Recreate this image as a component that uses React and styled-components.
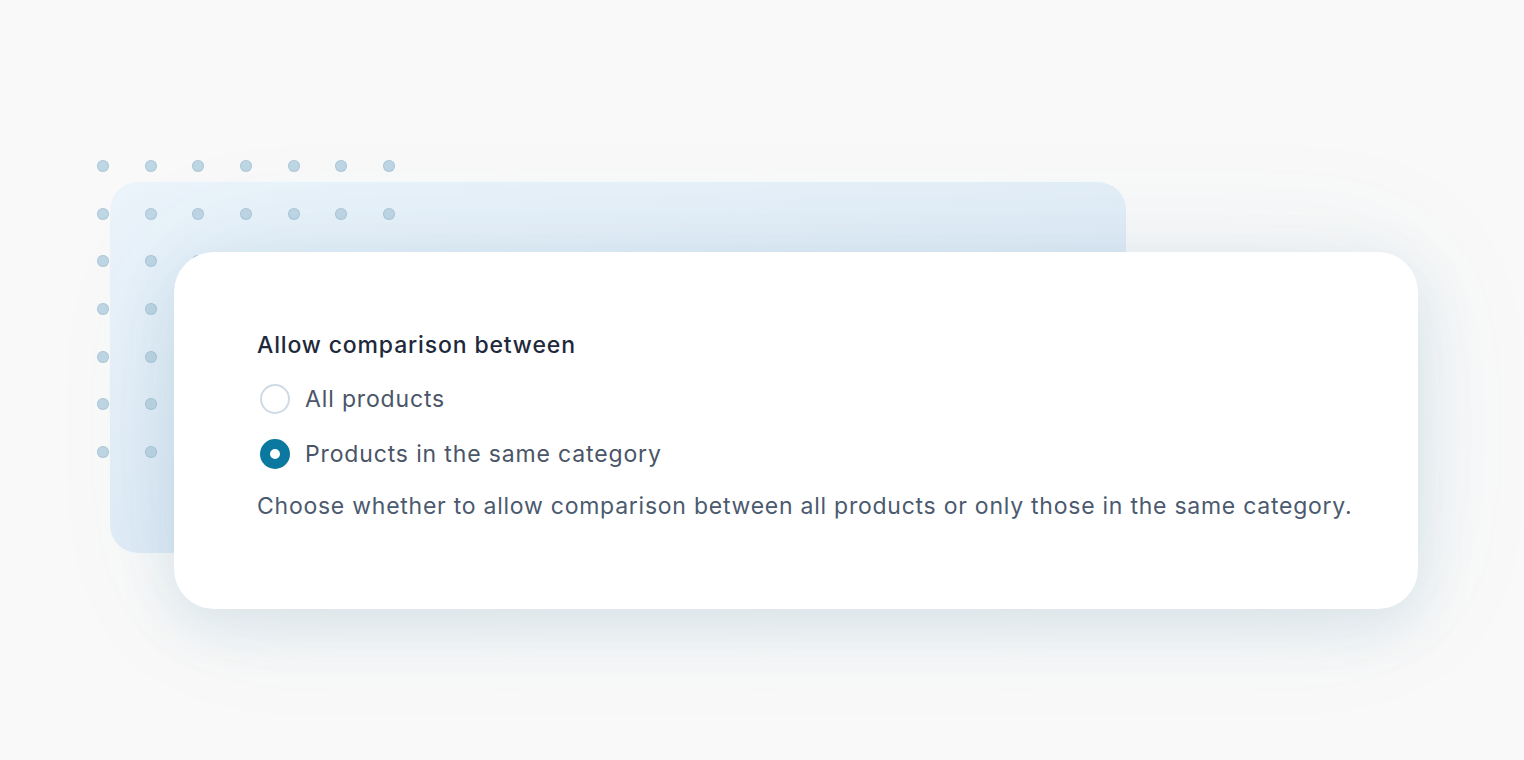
import React from 'react'
import styled, { createGlobalStyle } from 'styled-components'

const GlobalStyle = createGlobalStyle`
  html, body {
    margin: 0;
    padding: 0;
    background: #f9f9f9;
  }
  body {
    font-family: Inter, "Noto Sans", "Liberation Sans", sans-serif;
    -webkit-font-smoothing: antialiased;
  }
`

const Stage = styled.div`
  position: relative;
  width: 1524px;
  height: 760px;
  overflow: hidden;
  padding: 252px 0 0 174px;
  box-sizing: border-box;
`

const BackPanel = styled.div`
  position: absolute;
  left: 110px;
  top: 182px;
  width: 1016px;
  height: 371px;
  border-radius: 28px;
  background: linear-gradient(165deg, #ebf4fb 0%, #e1ecf6 55%, #dce9f3 100%);
`

const DotGrid = styled.div`
  position: absolute;
  left: 97px;
  top: 160px;
  display: grid;
  grid-template-columns: repeat(7, 12px);
  grid-auto-rows: 12px;
  column-gap: 35.7px;
  row-gap: 35.7px;
`

const Dot = styled.span`
  width: 12px;
  height: 12px;
  border-radius: 50%;
  background: #bfd6e4;
  box-shadow: inset 0 0 0 1px rgba(140, 175, 195, 0.35);
`

const Card = styled.section`
  position: relative;
  width: 1244px;
  height: 357px;
  box-sizing: border-box;
  padding: 78px 0 0 83px;
  background: #fff;
  border-radius: 40px;
  box-shadow:
    0 16px 60px rgba(20, 100, 135, 0.12),
    0 0 140px rgba(40, 120, 150, 0.07);
`

const Heading = styled.div`
  font-size: 23px;
  line-height: 30px;
  font-weight: 500;
  letter-spacing: 0.85px;
  color: #1e293b;
  margin-bottom: 24px;
`

const Options = styled.div`
  display: flex;
  flex-direction: column;
  gap: 25px;
  margin-bottom: 22px;
`

const Option = styled.label`
  display: flex;
  align-items: center;
  gap: 15px;
  height: 30px;
  font-size: 23px;
  letter-spacing: 0.85px;
  color: #4a5568;
  cursor: pointer;
`

const Radio = styled.span`
  width: 30px;
  height: 30px;
  box-sizing: border-box;
  border-radius: 50%;
  margin-left: 3px;
  flex-shrink: 0;
  border: ${(p) => (p.checked ? '10px solid #0a789f' : '2px solid #cfdae4')};
  background: #fff;
`

const Description = styled.p`
  margin: 0;
  font-size: 23px;
  line-height: 30px;
  letter-spacing: 0.75px;
  color: #4b5a6e;
`

const options = [
  { label: 'All products', checked: false },
  { label: 'Products in the same category', checked: true },
]

const App = () => {
  return (
    <>
      <GlobalStyle />
      <Stage>
        <BackPanel />
        <DotGrid>
          {Array.from({ length: 49 }).map((_, i) => (
            <Dot key={i} />
          ))}
        </DotGrid>
        <Card>
          <Heading>Allow comparison between</Heading>
          <Options>
            {options.map((o) => (
              <Option key={o.label}>
                <Radio checked={o.checked} />
                {o.label}
              </Option>
            ))}
          </Options>
          <Description>
            Choose whether to allow comparison between all products or only
            those in the same category.
          </Description>
        </Card>
      </Stage>
    </>
  )
}

export default App
